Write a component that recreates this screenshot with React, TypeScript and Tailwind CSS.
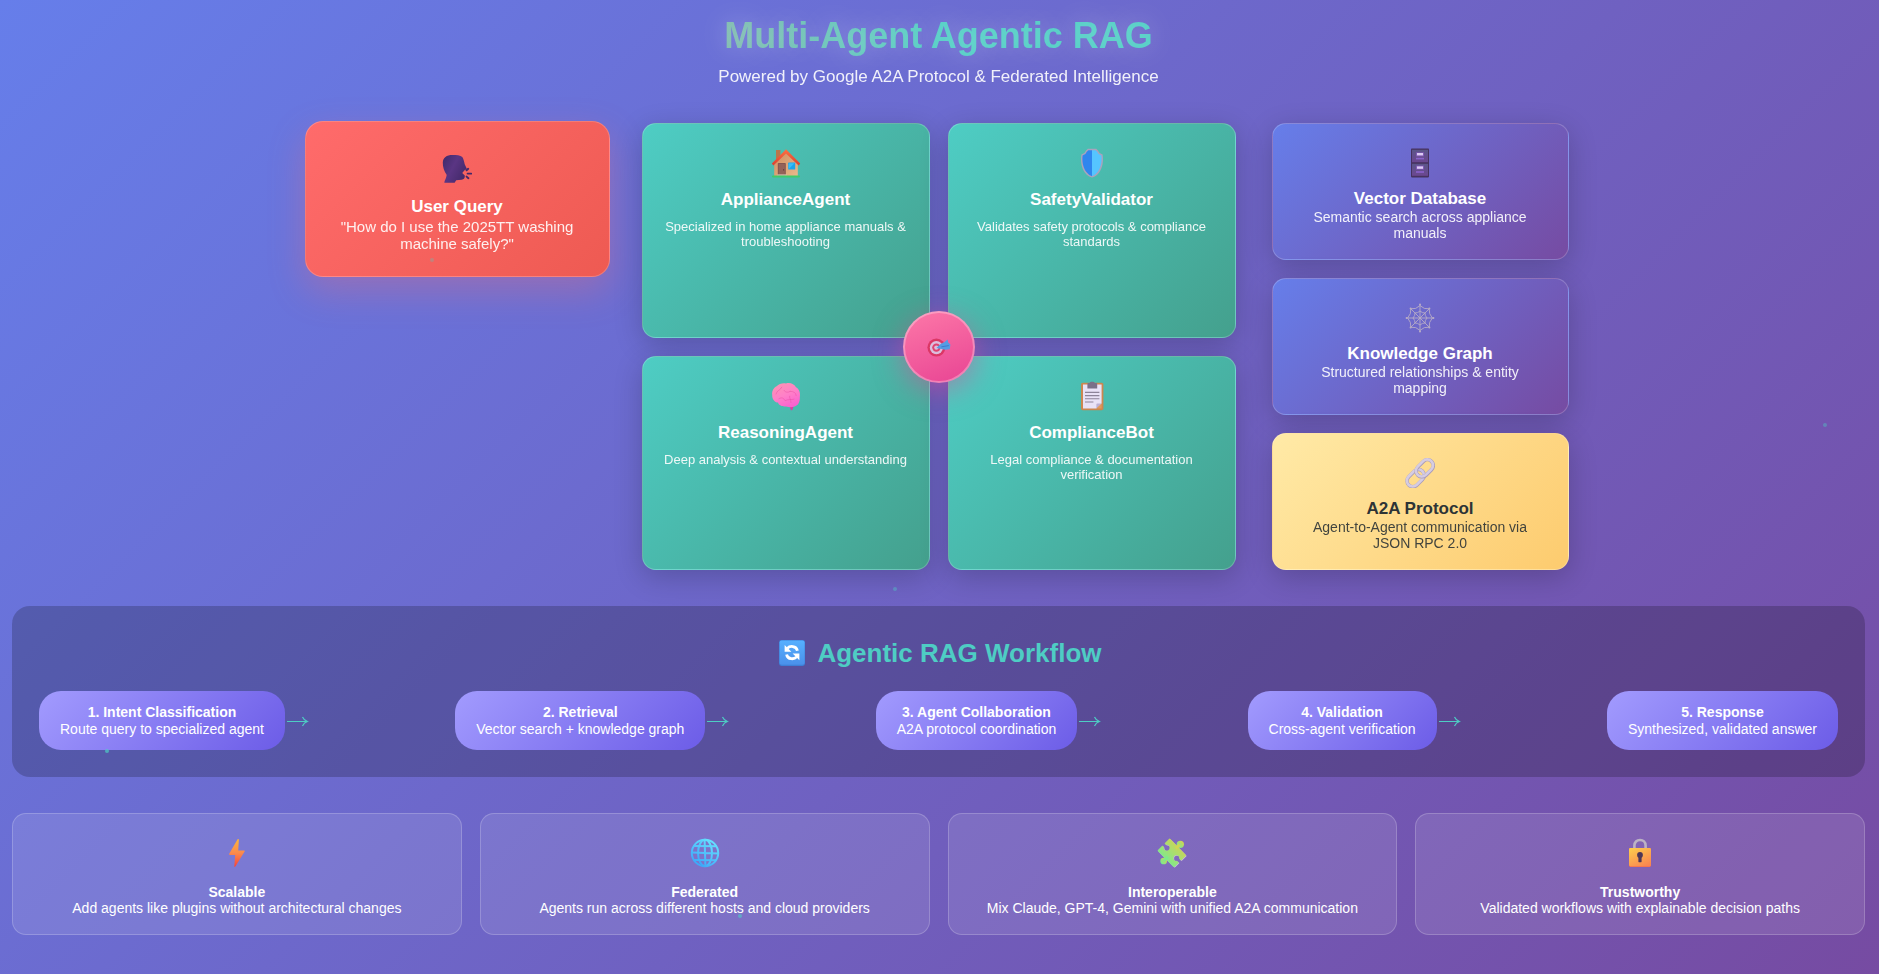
import type { ReactNode } from "react";

/* ---------- Icons ---------- */

function SpeakingHeadIcon() {
  return (
    <svg viewBox="0 0 30 30" className="size-[30px]" aria-hidden="true">
      <defs>
        <linearGradient id="head" x1="0" y1="0" x2="1" y2="0.6">
          <stop offset="0" stopColor="#3e2a68" />
          <stop offset="0.5" stopColor="#5a3583" />
          <stop offset="1" stopColor="#452a6c" />
        </linearGradient>
      </defs>
      <path
        d="M0.8 8.5C1 3.5 4.5 1 10.5 1C14.5 1 18.5 1.2 20.3 3C21.6 4.6 22 7.4 22.7 10.2L24.6 14.2C25 15.2 24.3 15.7 23 15.8L20.2 19L22.8 21.6C23 24 22 25.6 19.6 25.8L14.2 26.2L12.6 28.8H2.4C2.2 27.2 5 22.8 4.6 20.8C2.2 17.4 0.6 13 0.8 8.5Z"
        fill="url(#head)"
      />
      <g stroke="#43286a" strokeWidth="1.9" strokeLinecap="round">
        <path d="M24.6 16.3L26.2 14.8M25.6 19.6H29.2M24.6 22.6L26.4 24.2" />
      </g>
    </svg>
  );
}

function HouseIcon() {
  return (
    <svg viewBox="0 0 30 30" className="size-[30px]" aria-hidden="true">
      <defs>
        <linearGradient id="wall" x1="0" y1="0" x2="1" y2="1">
          <stop offset="0" stopColor="#d08a5c" />
          <stop offset="1" stopColor="#e9b98c" />
        </linearGradient>
        <linearGradient id="roof" x1="0" y1="0" x2="0" y2="1">
          <stop offset="0" stopColor="#ff7043" />
          <stop offset="1" stopColor="#d9402f" />
        </linearGradient>
      </defs>
      <rect x="5" y="2" width="4.4" height="10" fill="#b9764b" />
      <path d="M15 3L26.8 15.5V28H3.2V15.5Z" fill="url(#wall)" />
      <path d="M15 1.2L29.2 15.4L27.6 17.4L15 5.4L2.4 17.4L0.8 15.4Z" fill="url(#roof)" />
      <rect x="6.8" y="15" width="8" height="12.6" rx="0.8" fill="#85564f" />
      <rect x="7.8" y="16" width="6" height="11.6" fill="#946259" />
      <circle cx="12.6" cy="21.8" r="0.6" fill="#4e2f31" />
      <rect x="17.2" y="14.6" width="7" height="7" rx="0.6" fill="#1ba5ec" />
      <path d="M17.8 15.2H23.6L17.8 21Z" fill="#38bdf8" />
      <rect x="6.4" y="26.4" width="9.2" height="1.4" fill="#d9c1b5" />
      <rect x="1" y="27.4" width="28" height="2" rx="0.8" fill="#3fcb6b" />
    </svg>
  );
}

function ShieldIcon() {
  return (
    <svg viewBox="0 0 30 30" className="size-[30px]" aria-hidden="true">
      <path
        d="M15 0.8H19.2L21 2.4L22.6 5L25.6 6.6C26.6 13 25.8 20 21.8 25C19.8 27.4 17.4 29.2 15 29.6C12.6 29.2 10.2 27.4 8.2 25C4.2 20 3.4 13 4.4 6.6L7.4 5L9 2.4L10.8 0.8Z"
        fill="#a9a3bd"
      />
      <path
        d="M15 2.2H18.6L20.2 3.8L21.6 6L24.4 7.6C25 13.4 24.2 19.2 20.8 23.8C19 26 17 27.8 15 28.2V2.2Z"
        fill="#55c5ff"
      />
      <path
        d="M15 2.2H11.4L9.8 3.8L8.4 6L5.6 7.6C5 13.4 5.8 19.2 9.2 23.8C11 26 13 27.8 15 28.2V2.2Z"
        fill="#2f86ee"
      />
    </svg>
  );
}

function BrainIcon() {
  return (
    <svg viewBox="0 0 30 30" className="size-[30px]" aria-hidden="true">
      <defs>
        <linearGradient id="brain" x1="0.2" y1="0" x2="0.7" y2="1">
          <stop offset="0" stopColor="#ff93b4" />
          <stop offset="0.5" stopColor="#ff80c8" />
          <stop offset="1" stopColor="#fb5fd0" />
        </linearGradient>
      </defs>
      <path d="M18 24L20 29.4C21.4 29.4 22.4 28 22.2 24Z" fill="#d93fa4" />
      <path
        d="M1.2 14C0.6 9.6 3 6.4 5.6 5.2C8 2.4 12 1.8 15 2.4C19 1.2 23.4 3 25 6.2C28.4 8 29.6 12.4 28.8 16C29 19.4 28 23.4 25.4 24.6C22.6 26.6 18.4 26.4 15 25.4C11.4 26 7.6 24.4 7 21.6C3.8 21.4 1 18.4 1.2 14Z"
        fill="url(#brain)"
      />
      <g fill="none" stroke="#e74fa3" strokeOpacity="0.6" strokeWidth="0.8" strokeLinecap="round">
        <path d="M5 13C6 9 9.4 9.4 10.8 6.2M19 10.4C17 12 14 11.2 13 9.4M19 10.4C22.6 10.2 25 11.6 25.2 14.6M8 17.6C11 16 12.6 17 14 19.6C17.6 18 20.2 19 23 18.2M18.6 15.2C18.2 17.2 20 18.2 20 21.6" />
      </g>
    </svg>
  );
}

function ClipboardIcon() {
  return (
    <svg viewBox="0 0 30 30" className="size-[30px]" aria-hidden="true">
      <rect x="4" y="1.8" width="22.4" height="27.4" rx="1.6" fill="#cb8750" />
      <path d="M6 3.6H24.6V22.6L19.4 27.6H6Z" fill="#e9e2f6" />
      <path d="M19.4 27.6V23.6C19.4 22.9 19.8 22.6 20.4 22.6H24.6Z" fill="#bdb0d4" />
      <path d="M24.6 22.6L19.4 27.6H24.6Z" fill="#e19a5c" />
      <path d="M10.4 3.4C10.4 2.4 11 2 12 2H12.6C12.8 0.2 17.6 0.2 17.8 2H18.6C19.6 2 20.2 2.4 20.2 3.4V7.4H10.4Z" fill="#7b7088" />
      <g stroke="#8d8499" strokeWidth="1.1">
        <path d="M8 11.4H22.4M8 14.6H22.4M8 17.8H22.4M8 21H16.4" />
      </g>
    </svg>
  );
}

function CabinetIcon() {
  return (
    <svg viewBox="0 0 30 30" className="size-[30px]" aria-hidden="true">
      <defs>
        <linearGradient id="drawer" x1="0" y1="0" x2="0" y2="1">
          <stop offset="0" stopColor="#5b5689" />
          <stop offset="1" stopColor="#6b4790" />
        </linearGradient>
      </defs>
      <rect x="6" y="0.6" width="18" height="28.8" rx="0.8" fill="#46325f" />
      <rect x="7" y="1.8" width="16" height="12.4" fill="url(#drawer)" />
      <rect x="7" y="15.8" width="16" height="12" fill="url(#drawer)" />
      <rect x="11" y="4.4" width="8" height="4" fill="#8059b5" />
      <rect x="12" y="5" width="6" height="2.4" fill="#dccbf5" />
      <rect x="11" y="9.8" width="8" height="1.6" fill="#8a62cb" />
      <rect x="11" y="17.6" width="8" height="4" fill="#8059b5" />
      <rect x="12" y="18.4" width="6" height="2.4" fill="#dccbf5" />
      <rect x="11" y="23.2" width="8" height="1.6" fill="#8a62cb" />
    </svg>
  );
}

function WebIcon() {
  return (
    <svg viewBox="0 0 30 30" className="size-[30px]" aria-hidden="true">
      <g fill="none" stroke="#b7abc6" strokeWidth="0.9">
        <path d="M15 1V29M1 15H29M5.4 5.4L24.6 24.6M24.6 5.4L5.4 24.6" />
        <path d="M15 2.6Q19 6.6 24.2 5.8Q23.6 11 27.4 15Q23.6 19 24.2 24.2Q19 23.4 15 27.4Q11 23.4 5.8 24.2Q6.4 19 2.6 15Q6.4 11 5.8 5.8Q11 6.6 15 2.6Z" />
        <path d="M15 8Q17.4 10.2 20 10Q19.8 12.6 22 15Q19.8 17.4 20 20Q17.4 19.8 15 22Q12.6 19.8 10 20Q10.2 17.4 8 15Q10.2 12.6 10 10Q12.6 10.2 15 8Z" />
      </g>
      <g fill="#b7abc6">
        <circle cx="15" cy="1.6" r="1" />
        <circle cx="15" cy="28.4" r="1" />
        <circle cx="1.6" cy="15" r="1" />
        <circle cx="28.4" cy="15" r="1" />
        <circle cx="5.6" cy="5.6" r="1" />
        <circle cx="24.4" cy="5.6" r="1" />
        <circle cx="5.6" cy="24.4" r="1" />
        <circle cx="24.4" cy="24.4" r="1" />
      </g>
    </svg>
  );
}

function LinkIcon() {
  return (
    <svg viewBox="0 0 30 30" className="size-[30px]" aria-hidden="true">
      <g fill="none" transform="rotate(-45 15 15)">
        <rect x="-1.4" y="9.8" width="19.4" height="11.6" rx="5.8" stroke="#a99cba" strokeWidth="3.6" />
        <rect x="-1.4" y="9.4" width="19.4" height="11.6" rx="5.8" stroke="#d5cce2" strokeWidth="2.6" />
        <rect x="12" y="9.2" width="19.4" height="11.6" rx="5.8" stroke="#a99cba" strokeWidth="3.6" />
        <rect x="12" y="8.8" width="19.4" height="11.6" rx="5.8" stroke="#d5cce2" strokeWidth="2.6" />
      </g>
    </svg>
  );
}

function TargetIcon() {
  return (
    <svg viewBox="0 0 24 20" className="h-5 w-6 opacity-85" aria-hidden="true">
      <circle cx="9.4" cy="10.6" r="9" fill="#d8315c" />
      <circle cx="9.4" cy="10.6" r="6.6" fill="#d9cfe8" />
      <circle cx="9.4" cy="10.6" r="4.2" fill="#dc3f68" />
      <circle cx="9.4" cy="10.6" r="2.2" fill="#d9cfe8" />
      <path d="M9.4 11L13.6 7L17.6 5L20.6 2.4L21.2 5.6L23.4 7.4L22.8 12.2L18.4 12.8L14.6 12Z" fill="#3ba7f0" />
      <path d="M14.4 9.8L21.8 8.6" stroke="#1f7fd6" strokeWidth="1" />
    </svg>
  );
}

function CycleIcon() {
  return (
    <svg viewBox="0 0 26 26" className="size-[26px]" aria-hidden="true">
      <defs>
        <linearGradient id="cycle" x1="0" y1="0" x2="0" y2="1">
          <stop offset="0" stopColor="#56b0ff" />
          <stop offset="1" stopColor="#4a90ea" />
        </linearGradient>
      </defs>
      <rect x="0" y="0" width="26" height="26" rx="2.4" fill="#3d7fd6" />
      <rect x="0.6" y="0.4" width="25" height="24.4" rx="2.2" fill="url(#cycle)" />
      <g fill="none" stroke="#fff" strokeWidth="2.8">
        <path d="M8.4 8.4C10.6 5.8 17.4 5.2 18.4 10.8" />
        <path d="M17.6 16.8C15.4 19.4 8.6 20 7.6 14.4" />
      </g>
      <path d="M5.6 5V11.8H12.4Z" fill="#fff" />
      <path d="M20.4 20.2V13.4H13.6Z" fill="#fff" />
    </svg>
  );
}

function BoltIcon() {
  return (
    <svg viewBox="0 0 30 30" className="size-[30px]" aria-hidden="true">
      <defs>
        <linearGradient id="bolt" x1="0" y1="0" x2="0" y2="1">
          <stop offset="0" stopColor="#fcb53b" />
          <stop offset="0.5" stopColor="#fb8a4c" />
          <stop offset="1" stopColor="#f4433c" />
        </linearGradient>
      </defs>
      <path
        d="M15.6 1.2C16.2 0.8 17 1 16.9 1.8L16.2 12.4H22C22.8 12.4 23 13 22.6 13.6L13.4 28.6C13 29.2 12.2 29 12.3 28.2L13.2 17H7.8C7.2 17 6.9 16.4 7.2 15.8Z"
        fill="url(#bolt)"
      />
    </svg>
  );
}

function GlobeIcon() {
  return (
    <svg viewBox="0 0 30 30" className="size-[30px]" aria-hidden="true">
      <defs>
        <linearGradient id="globe" x1="0.8" y1="0" x2="0.2" y2="1">
          <stop offset="0" stopColor="#66e2ff" />
          <stop offset="1" stopColor="#3ba5f8" />
        </linearGradient>
      </defs>
      <g fill="none" stroke="url(#globe)" strokeWidth="2">
        <circle cx="15" cy="15" r="13.2" />
        <ellipse cx="15" cy="15" rx="7" ry="13.2" />
        <path d="M1.8 14.6L28.2 15.4M14.6 1.8L15.4 28.2M4 8L26 8.2M4 22L26 22.2" />
      </g>
    </svg>
  );
}

function PuzzleIcon() {
  return (
    <svg viewBox="-2 -2 90 90" className="size-[30px]" aria-hidden="true">
      <defs>
        <linearGradient id="puzzle" x1="0.85" y1="0.1" x2="0.1" y2="0.85">
          <stop offset="0" stopColor="#d6d24f" />
          <stop offset="1" stopColor="#72ec95" />
        </linearGradient>
        <mask id="notches" maskUnits="userSpaceOnUse" x="-4" y="-4" width="96" height="96">
          <rect x="-4" y="-4" width="96" height="96" fill="#fff" />
          <circle cx="27" cy="27" r="8.5" fill="#000" />
          <path d="M15 15L25 25" stroke="#000" strokeWidth="9" />
          <circle cx="56" cy="58" r="8.5" fill="#000" />
          <path d="M58 60L72 74" stroke="#000" strokeWidth="9" />
        </mask>
      </defs>
      <g mask="url(#notches)" transform="translate(2 2)" fill="#c9b8e0" strokeLinejoin="round" stroke="#c9b8e0" strokeWidth="5">
        <path d="M36 3L82 50L49 82L3 36Z" />
      </g>
      <g mask="url(#notches)" fill="url(#puzzle)">
        <path d="M36 3L82 50L49 82L3 36Z" stroke="url(#puzzle)" strokeWidth="6" strokeLinejoin="round" />
        <circle cx="68" cy="17" r="11" />
        <path d="M54 30L66 18" stroke="#cfd556" strokeWidth="9" />
        <circle cx="18" cy="67" r="10" />
        <path d="M18 67L30 54" stroke="#7fe98c" strokeWidth="9" />
      </g>
    </svg>
  );
}

function LockIcon() {
  return (
    <svg viewBox="0 0 30 30" className="size-[30px]" aria-hidden="true">
      <defs>
        <linearGradient id="lock" x1="0.2" y1="0" x2="0.8" y2="1">
          <stop offset="0" stopColor="#fdc94d" />
          <stop offset="1" stopColor="#f98550" />
        </linearGradient>
      </defs>
      <path d="M9.4 11V7.6C9.4 4.2 11.8 2 15 2C18.2 2 20.6 4.2 20.6 7.6V11" fill="none" stroke="#bcb3c4" strokeWidth="2.6" />
      <rect x="4" y="10" width="22" height="19" rx="1.4" fill="#f2714f" />
      <rect x="4" y="10" width="22" height="18.2" rx="1.4" fill="url(#lock)" />
      <circle cx="15" cy="17" r="2.9" fill="#4c3657" />
      <path d="M13.4 18H16.6V23.4C16.6 24.6 13.4 24.6 13.4 23.4Z" fill="#4c3657" />
    </svg>
  );
}

/* ---------- Data ---------- */

const agents = [
  { icon: <HouseIcon />, name: "ApplianceAgent", text: "Specialized in home appliance manuals & troubleshooting" },
  { icon: <ShieldIcon />, name: "SafetyValidator", text: "Validates safety protocols & compliance standards" },
  { icon: <BrainIcon />, name: "ReasoningAgent", text: "Deep analysis & contextual understanding" },
  { icon: <ClipboardIcon />, name: "ComplianceBot", text: "Legal compliance & documentation verification" },
];

const steps = [
  { title: "1. Intent Classification", text: "Route query to specialized agent" },
  { title: "2. Retrieval", text: "Vector search + knowledge graph" },
  { title: "3. Agent Collaboration", text: "A2A protocol coordination" },
  { title: "4. Validation", text: "Cross-agent verification" },
  { title: "5. Response", text: "Synthesized, validated answer" },
];

const features = [
  { icon: <BoltIcon />, title: "Scalable", text: "Add agents like plugins without architectural changes" },
  { icon: <GlobeIcon />, title: "Federated", text: "Agents run across different hosts and cloud providers" },
  { icon: <PuzzleIcon />, title: "Interoperable", text: "Mix Claude, GPT-4, Gemini with unified A2A communication" },
  { icon: <LockIcon />, title: "Trustworthy", text: "Validated workflows with explainable decision paths" },
];

/* ---------- Parts ---------- */

type ResourceProps = { icon: ReactNode; title: string; text: string; tone: "violet" | "yellow" };

function ResourceCard({ icon, title, text, tone }: ResourceProps) {
  const toneClass =
    tone === "yellow"
      ? "bg-[linear-gradient(135deg,#ffeaa7,#fdcb6e)] text-[#2d3436]"
      : "bg-[linear-gradient(135deg,#667eea,#764ba2)] text-white";
  return (
    <article
      className={`flex flex-1 flex-col items-center rounded-[14px] border border-white/20 px-[22px] pt-6 text-center shadow-[0_7px_29px_rgba(0,0,0,0.2)] ${toneClass}`}
    >
      {icon}
      <h3 className="mt-[11px] text-[17px] leading-5 font-bold">{title}</h3>
      <p className="text-[14px] leading-4 opacity-90">{text}</p>
    </article>
  );
}

const particles = [
  "left-[97%] top-[43.4%] opacity-40",
  "left-[47.5%] top-[60.2%] opacity-40",
  "left-[5.6%] top-[76.8%] opacity-70",
  "left-[39.3%] top-[93.7%] opacity-60",
  "left-[22.9%] top-[26.5%] opacity-30",
];

export default function App() {
  return (
    <div className="relative min-h-screen overflow-hidden bg-[linear-gradient(135deg,#667eea_0%,#764ba2_100%)] pr-3.5 pb-10 pl-3 font-['Liberation_Sans',Arial,sans-serif] text-white">
      <header className="pt-4 text-center">
        <h1 className="mx-auto w-fit bg-[linear-gradient(90deg,#80bbaf,#53cfc6_50%)] bg-clip-text text-[36px] leading-10 font-bold text-transparent [text-shadow:0_0_27px_rgba(255,255,255,0.3)]">
          Multi-Agent Agentic RAG
        </h1>
        <p className="mt-[11px] text-[17px] leading-5 opacity-90">
          Powered by Google A2A Protocol &amp; Federated Intelligence
        </p>
      </header>

      <main>
        <section className="mx-auto mt-9 grid max-w-[1260px] grid-cols-[1fr_2fr_1fr] gap-9">
          <article className="-mx-1 -mt-0.5 flex h-[156px] flex-col items-center self-start rounded-[18px] border border-white/20 bg-[linear-gradient(135deg,#ff6b6b,#ee5a52)] px-7 pt-8 text-center shadow-[0_14px_36px_rgba(255,107,107,0.3)]">
            <SpeakingHeadIcon />
            <h2 className="mt-3 text-[17px] leading-[22px] font-bold">User Query</h2>
            <p className="text-[15px] leading-[17px] opacity-90">
              "How do I use the 2025TT washing machine safely?"
            </p>
          </article>

          <div className="relative grid grid-cols-2 grid-rows-2 gap-[18px]">
            {agents.map((agent) => (
              <article
                key={agent.name}
                className="flex flex-col items-center rounded-[14px] border border-white/20 bg-[linear-gradient(135deg,#4ecdc4,#44a08d)] px-[18px] pt-6 text-center shadow-[0_7px_29px_rgba(0,0,0,0.2)]"
              >
                {agent.icon}
                <h3 className="mt-3 text-[17px] leading-5 font-bold">{agent.name}</h3>
                <p className="mt-[9px] text-[13px] leading-[15px] opacity-90">{agent.text}</p>
              </article>
            ))}
            <div className="absolute top-1/2 left-1/2 flex size-[72px] -translate-x-1/2 -translate-y-1/2 items-center justify-center rounded-full border-2 border-white/30 bg-[linear-gradient(160deg,#fd79a8,#e84393)] bg-origin-border shadow-[0_7px_29px_rgba(232,67,147,0.5)]">
              <TargetIcon />
            </div>
          </div>

          <div className="flex h-[447px] flex-col gap-[18px]">
            <ResourceCard icon={<CabinetIcon />} title="Vector Database" text="Semantic search across appliance manuals" tone="violet" />
            <ResourceCard icon={<WebIcon />} title="Knowledge Graph" text="Structured relationships & entity mapping" tone="violet" />
            <ResourceCard icon={<LinkIcon />} title="A2A Protocol" text="Agent-to-Agent communication via JSON RPC 2.0" tone="yellow" />
          </div>
        </section>

        <section className="relative mt-9 rounded-[18px] bg-black/20 px-[27px] pt-8 pb-[27px]">
          <h2 className="flex items-center justify-center gap-3 pl-1 text-[26px] leading-[30px] font-bold text-[#4ecdc4]">
            <CycleIcon />
            Agentic RAG Workflow
          </h2>
          <ol className="mt-[23px] flex items-center">
            {steps.map((step, i) => (
              <li key={step.title} className={i < steps.length - 1 ? "flex flex-auto items-center" : "flex items-center"}>
                <div className="rounded-[22px] bg-[linear-gradient(135deg,#a29bfe,#6c5ce7)] px-[21px] py-[13px] text-center text-[14px]">
                  <h3 className="leading-[17px] font-bold">{step.title}</h3>
                  <p className="leading-4">{step.text}</p>
                </div>
                {i < steps.length - 1 && (
                  <svg viewBox="0 0 24 12" className="h-3 w-6 text-[#4ecdc4]" aria-hidden="true">
                    <path d="M2 6.5H22M17.5 2Q19 5.4 22.4 6.5Q19 7.6 17.5 11" fill="none" stroke="currentColor" strokeWidth="1.2" />
                  </svg>
                )}
              </li>
            ))}
          </ol>
        </section>

        <section className="mt-9 grid grid-cols-4 gap-[18px]">
          {features.map((feature) => (
            <article
              key={feature.title}
              className="flex flex-col items-center rounded-[14px] border border-white/20 bg-white/10 px-[18px] pt-6 pb-[18px] text-center text-[14px]"
            >
              {feature.icon}
              <h3 className="mt-4 leading-4 font-bold">{feature.title}</h3>
              <p className="leading-4">{feature.text}</p>
            </article>
          ))}
        </section>
      </main>

      {particles.map((place) => (
        <span key={place} className={`absolute size-1 rounded-full bg-[#4ecdc4] ${place}`} />
      ))}
    </div>
  );
}
